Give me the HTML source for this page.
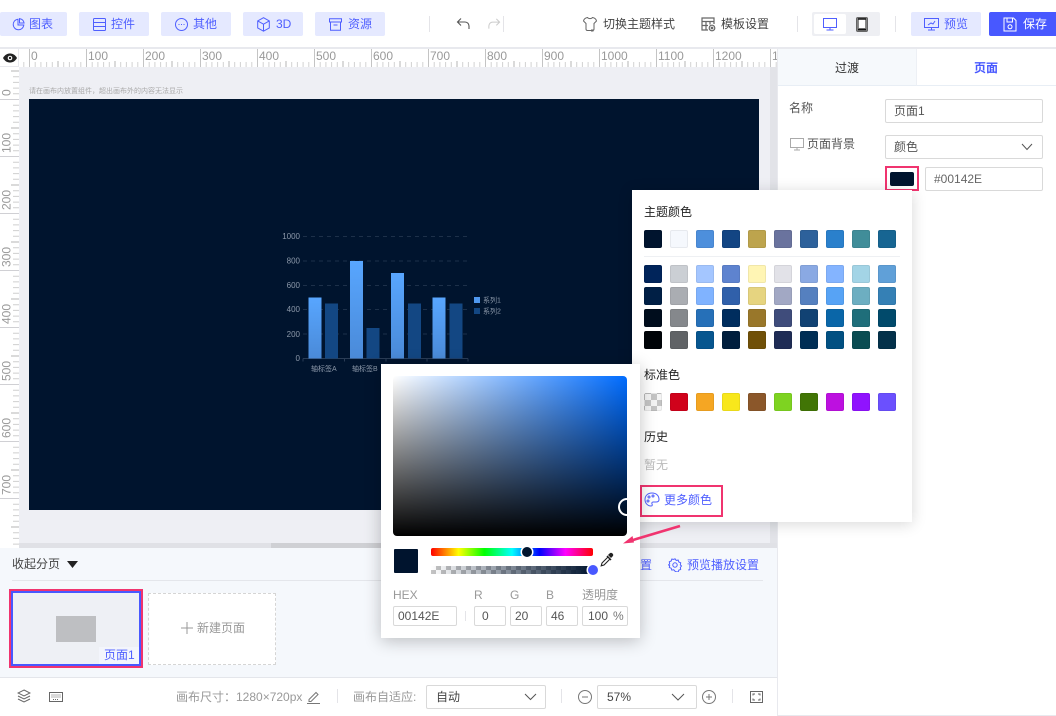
<!DOCTYPE html>
<html><head><meta charset="utf-8">
<style>
html,body{margin:0;padding:0;background:#fff}
#r{position:relative;width:1056px;height:716px;overflow:hidden;background:#fff;font-family:"Liberation Sans","Noto Sans CJK SC",sans-serif;font-size:12px;color:#333}
#r div,#r span.a,#r svg{position:absolute}
.t{white-space:nowrap;line-height:16px}
.btn{background:#e5e9ff;border-radius:2px;top:12px;height:24px}
.bt{color:#4f5fff;top:16px}
.inp{border:1px solid #d9d9d9;border-radius:2px;background:#fff;box-sizing:border-box;color:#555;line-height:20px;padding-left:3px;white-space:nowrap}
.row{left:644px;display:flex;gap:8px}
#r .row i{display:block;width:18px;height:18px;border-radius:2px;box-sizing:border-box;border:1px solid rgba(0,0,0,.06)}
.lab{color:#999;top:587px;line-height:16px}
.vd{width:1px;background:#e4e4e8}
</style></head><body><div id="r">

<!-- top bar -->
<div class="btn" style="left:0;width:67px"></div>
<div class="btn" style="left:79px;width:70px"></div>
<div class="btn" style="left:161px;width:70px"></div>
<div class="btn" style="left:243px;width:60px"></div>
<div class="btn" style="left:315px;width:70px"></div>
<svg style="left:12px;top:18px" width="13" height="13" viewBox="0 0 13 13" fill="none" stroke="#4f5fff"><path d="M6 1.200a5.300 5.300 0 1 0 5.800 5.800H6z"/><path d="M7.500.6v4.400h4.600A5 5 0 0 0 7.500.6z"/></svg>
<div class="t bt" style="left:29px">图表</div>
<svg style="left:93px;top:18px" width="13" height="13" viewBox="0 0 13 13" fill="none" stroke="#4f5fff"><rect x=".5" y=".5" width="12" height="12" rx="1"/><path d="M.5 4.500h12M.5 8.500h12"/></svg>
<div class="t bt" style="left:111px">控件</div>
<svg style="left:175px;top:18px" width="13" height="13" viewBox="0 0 13 13" fill="none" stroke="#4f5fff"><circle cx="6.500" cy="6.500" r="6"/><path d="M3.500 6.500h1M6 6.500h1M8.500 6.500h1"/></svg>
<div class="t bt" style="left:193px">其他</div>
<svg style="left:257px;top:17px" width="13" height="15" viewBox="0 0 13 15" fill="none" stroke="#4f5fff"><path d="M6.500.7l5.800 3.200v7l-5.800 3.300L.7 10.900v-7zM.7 3.900l5.800 3.300 5.800-3.300M6.500 7.200v7"/></svg>
<div class="t bt" style="left:276px">3D</div>
<svg style="left:329px;top:18px" width="13" height="13" viewBox="0 0 13 13" fill="none" stroke="#4f5fff"><path d="M.5.800h12v3.200H.5zM1.500 4v8.200h10V4M4.500 7h4"/></svg>
<div class="t bt" style="left:348px">资源</div>

<div class="vd" style="left:429px;top:16px;height:16px"></div>
<svg style="left:456px;top:17px" width="15" height="14" viewBox="0 0 15 14" fill="none" stroke="#555" stroke-width="1.100"><path d="M5 1.500L1.500 5 5 8.500M1.500 5H9a4 4 0 0 1 4 4v3"/></svg>
<svg style="left:487px;top:17px" width="14" height="14" viewBox="0 0 15 14" fill="none" stroke="#ccc" stroke-width="1.100"><path d="M10 1.500L13.500 5 10 8.500M13.500 5H6a4 4 0 0 0-4 4v3"/></svg>
<div class="vd" style="left:503px;top:16px;height:16px"></div>
<svg style="left:582px;top:16px" width="16" height="17" viewBox="0 0 16 17" fill="none" stroke="#666"><path d="M5.500 1.500C6.500 3 9.500 3 10.500 1.500c2 .3 3.500 1.500 4 3.500l-2.500 2.500V13c0 1-.5 1.500-1.500 1.500h-5C4.500 14.500 4 14 4 13V7.500L1.500 5c.5-2 2-3.200 4-3.500z"/><path d="M9 14.500h2.500" stroke-width="2"/></svg>
<div class="t" style="left:603px;top:16px;color:#444">切换主题样式</div>
<svg style="left:701px;top:17px" width="15" height="15" viewBox="0 0 15 15" fill="none" stroke="#666" stroke-width="1.200"><path d="M13 7V1H1v12h6M1 4.500h12M5 4.500V13M9 4.500v3M1 8.500h6"/><circle cx="11" cy="11" r="2.800"/><circle cx="11" cy="11" r=".8" fill="#666"/></svg>
<div class="t" style="left:721px;top:16px;color:#444">模板设置</div>
<div class="vd" style="left:797px;top:16px;height:16px"></div>
<div style="left:812px;top:12px;width:68px;height:24px;background:#eeeff3;border-radius:2px"></div>
<div style="left:814px;top:14px;width:32px;height:20px;background:#fff;border-radius:2px"></div>
<svg style="left:823px;top:18px" width="14" height="13" viewBox="0 0 14 13" fill="none" stroke="#4f5fff"><rect x=".5" y=".5" width="13" height="9"/><path d="M7 9.500V12M3.500 12h7"/></svg>
<svg style="left:856px;top:17px" width="12" height="15" viewBox="0 0 12 15" fill="none" stroke="#333"><rect x=".6" y=".6" width="10.800" height="13.800" rx="1" stroke="#555" fill="#888"/><rect x="3" y="2.500" width="6" height="8.500" fill="#fff" stroke="none"/><path d="M2 2h8M2 12.500h8" stroke="#111" stroke-width="1.500"/></svg>
<div class="vd" style="left:895px;top:16px;height:16px"></div>
<div class="btn" style="left:911px;width:70px"></div>
<svg style="left:924px;top:18px" width="15" height="13" viewBox="0 0 15 13" fill="none" stroke="#4f5fff"><rect x=".5" y=".5" width="14" height="9"/><path d="M7.500 9.500V12M4 12h7M4 7l3-2 2 1 2-3"/></svg>
<div class="t bt" style="left:944px">预览</div>
<div style="left:989px;top:12px;width:67px;height:24px;background:#4858ff;border-radius:2px 0 0 2px"></div>
<svg style="left:1003px;top:17px" width="14" height="15" viewBox="0 0 14 15" fill="none" stroke="#fff"><path d="M1 1h9.500L13 3.500V14H1zM4 1v4h5.500V1"/><circle cx="7" cy="9.800" r="2"/></svg>
<div class="t" style="left:1023px;top:16px;color:#fff">保存</div>

<!-- separator -->
<div style="left:0;top:47px;width:1056px;height:2px;background:#e8e9ee"></div>

<!-- canvas background -->
<div style="left:19px;top:67px;width:751px;height:476px;background:#eeeff4"></div>
<div style="left:770px;top:67px;width:7px;height:481px;background:#e2e3e8"></div>
<div style="left:19px;top:543px;width:758px;height:5px;background:#e0e1e6"></div>
<div style="left:271px;top:543px;width:340px;height:5px;background:#cfd0d4"></div>

<!-- horizontal ruler -->
<svg style="left:0;top:49px" width="777" height="18" viewBox="0 0 777 18">
<defs><pattern id="hp" x="29" y="0" width="57" height="18" patternUnits="userSpaceOnUse">
<path d="M.5 0V18" stroke="#c4c4c4" fill="none"/>
<path d="M6.200 13V18M11.900 13V18M17.600 13V18M23.300 13V18M34.700 13V18M40.400 13V18M46.100 13V18M51.800 13V18" stroke="#d2d2d2" fill="none"/>
<path d="M29 12V18" stroke="#b5b5b5" fill="none"/></pattern></defs>
<rect x="19" width="758" height="18" fill="#fff"/>
<rect x="19" width="758" height="18" fill="url(#hp)"/>
<g font-family="Liberation Sans" font-size="12" fill="#999">
<text x="31" y="11">0</text><text x="88" y="11">100</text><text x="145" y="11">200</text><text x="202" y="11">300</text><text x="259" y="11">400</text><text x="316" y="11">500</text><text x="373" y="11">600</text><text x="430" y="11">700</text><text x="487" y="11">800</text><text x="544" y="11">900</text><text x="601" y="11">1000</text><text x="658" y="11">1100</text><text x="715" y="11">1200</text><text x="772" y="11">1300</text></g>
</svg>
<!-- eye -->
<div style="left:0;top:49px;width:19px;height:18px;background:#fff;border-right:1px solid #e8e9ee;border-bottom:1px solid #e8e9ee;box-sizing:border-box"></div>
<svg style="left:3px;top:53px" width="14" height="10" viewBox="0 0 14 10"><path d="M0 5C2 1.500 4.500.5 7 .5S12 1.500 14 5c-2 3.500-4.500 4.500-7 4.500S2 8.500 0 5z" fill="#222"/><circle cx="7" cy="5" r="2.300" fill="#fff"/><circle cx="7" cy="5" r="1.200" fill="#222"/></svg>

<!-- vertical ruler -->
<svg style="left:0;top:67px" width="19" height="481" viewBox="0 0 19 481">
<defs><pattern id="vp" x="0" y="32" width="19" height="57" patternUnits="userSpaceOnUse">
<path d="M0 .5H19" stroke="#d0d0d4" fill="none"/>
<path d="M13 6.200H19M13 11.900H19M13 17.600H19M13 23.300H19M13 34.700H19M13 40.400H19M13 46.100H19M13 51.800H19" stroke="#cfcfcf" fill="none"/>
<path d="M11 29H19" stroke="#b5b5b5" fill="none"/></pattern></defs>
<rect width="19" height="481" fill="#fff"/>
<rect width="19" height="481" fill="url(#vp)"/>
<g font-family="Liberation Sans" font-size="12" fill="#999">
<text transform="translate(10.500,29) rotate(-90)">0</text>
<text transform="translate(10.500,86) rotate(-90)">100</text>
<text transform="translate(10.500,143) rotate(-90)">200</text>
<text transform="translate(10.500,200) rotate(-90)">300</text>
<text transform="translate(10.500,257) rotate(-90)">400</text>
<text transform="translate(10.500,314) rotate(-90)">500</text>
<text transform="translate(10.500,371) rotate(-90)">600</text>
<text transform="translate(10.500,428) rotate(-90)">700</text></g>
</svg>

<!-- canvas -->
<div class="t" style="left:29px;top:84px;font-size:7px;color:#aaa">请在画布内放置组件，超出画布外的内容无法显示</div>
<div style="left:29px;top:99px;width:730px;height:411px;background:#00142e"></div>

<!-- chart -->
<svg style="left:270px;top:220px" width="250" height="165" viewBox="0 0 250 165">
<defs><linearGradient id="g1" x1="0" y1="0" x2="0" y2="1"><stop offset="0" stop-color="#58a6ff"/><stop offset="1" stop-color="#4a8ad8"/></linearGradient></defs>
<g stroke="#1d3049" stroke-dasharray="4 4" fill="none"><path d="M33 16.500H198M33 41H198M33 65.500H198M33 89.500H198M33 114H198"/></g>
<path d="M33 138.500H198M33 138.500v3M74.500 138.500v3M116 138.500v3M157 138.500v3M198 138.500v3" stroke="#2a3c55" fill="none"/>
<g fill="url(#g1)"><rect x="38.500" y="77.500" width="13" height="61"/><rect x="80" y="41" width="13" height="97.500"/><rect x="121" y="53" width="13" height="85.500"/><rect x="162.500" y="77.500" width="13" height="61"/></g>
<g fill="#134783"><rect x="55" y="83.500" width="13" height="55"/><rect x="96.500" y="108" width="13" height="30.500"/><rect x="138" y="83.500" width="13" height="55"/><rect x="179.500" y="83.500" width="13" height="55"/></g>
<g font-family="Liberation Sans" font-size="8" fill="#8b98a9" text-anchor="end"><text x="30" y="19">1000</text><text x="30" y="43.500">800</text><text x="30" y="68">600</text><text x="30" y="92">400</text><text x="30" y="117">200</text><text x="30" y="141">0</text></g>
<rect x="204" y="77" width="6" height="6" fill="#4f98ef"/><rect x="204" y="88" width="6" height="6" fill="#134783"/>
<g font-family="Liberation Sans,Noto Sans CJK SC" font-size="7" fill="#8b98a9"><text x="213" y="82.500">系列1</text><text x="213" y="93.500">系列2</text><text x="41" y="151">轴标签A</text><text x="82" y="151">轴标签B</text></g>
</svg>

<!-- right panel -->
<div style="left:777px;top:49px;width:279px;height:667px;background:#fff;border-left:1px solid #e8e9ee;border-bottom:1px solid #e8e9ee;box-sizing:border-box"></div>
<div style="left:778px;top:49px;width:138px;height:37px;background:#f6f9fc;border-bottom:1px solid #e8eef5;box-sizing:border-box"></div>
<div style="left:916px;top:49px;width:140px;height:37px;border-left:1px solid #edf0f5;border-bottom:1px solid #e8eef5;box-sizing:border-box"></div>
<div class="t" style="left:835px;top:60px;color:#333">过渡</div>
<div class="t" style="left:974px;top:60px;color:#4858ff;font-weight:bold">页面</div>
<div class="t" style="left:789px;top:100px;color:#555">名称</div>
<div class="inp" style="left:885px;top:99px;width:158px;height:24px;padding-left:8px;line-height:23px">页面1</div>
<svg style="left:790px;top:138px" width="15" height="13" viewBox="0 0 15 13" fill="none" stroke="#aaa"><rect x=".5" y=".5" width="13" height="9"/><path d="M7 9.500V12M4 12h6"/></svg>
<div class="t" style="left:807px;top:136px;color:#555">页面背景</div>
<div class="inp" style="left:885px;top:135px;width:158px;height:24px;padding-left:8px;line-height:23px">颜色</div>
<svg style="left:1021px;top:143px" width="12" height="8" viewBox="0 0 12 8" fill="none" stroke="#555"><path d="M1 1l5 5.500L11 1"/></svg>
<div style="left:885px;top:166px;width:34px;height:25px;border:2px solid #f0346f;box-sizing:border-box"></div>
<div style="left:890px;top:172px;width:24px;height:14px;background:#00142e;border-radius:2px"></div>
<div class="inp" style="left:925px;top:167px;width:118px;height:24px;padding-left:8px;line-height:23px;color:#666">#00142E</div>

<!-- bottom panel -->
<div style="left:0;top:548px;width:777px;height:129px;background:#f5f8fc"></div>
<div style="left:0;top:677px;width:777px;height:1px;background:#e4e6eb"></div>
<div class="t" style="left:12px;top:556px;color:#444">收起分页</div>
<svg style="left:67px;top:561px" width="11" height="7" viewBox="0 0 11 7"><path d="M0 0h11L5.500 7z" fill="#222"/></svg>
<div style="left:12px;top:580px;width:751px;height:1px;background:#e4e6eb"></div>
<div class="t" style="left:640px;top:557px;color:#4f5fff">置</div>
<svg style="left:668px;top:558px" width="14" height="14" viewBox="0 0 14 14" fill="none" stroke="#4f5fff"><path d="M7 .8l1.200 1.600 2-.3.600 1.900 1.900.8-.4 2 1.200 1.200-1.200 1.500.4 1.900-1.900.7-.6 1.900-2-.3L7 13.200l-1.200-1.400-2 .3-.6-1.900-1.900-.7.400-1.900L.5 7l1.200-1.200-.4-2 1.900-.8.600-1.900 2 .3z"/><circle cx="7" cy="7" r="2.200"/></svg>
<div class="t" style="left:687px;top:557px;color:#4f5fff">预览播放设置</div>

<div style="left:9px;top:589px;width:134px;height:79px;border:2px solid #f0346f;box-sizing:border-box"></div>
<div style="left:11px;top:591px;width:130px;height:75px;border:2px solid #4858ff;background:#eef0f5;box-sizing:border-box"></div>
<div style="left:56px;top:616px;width:40px;height:26px;background:#bebfc2"></div>
<div style="left:99px;top:647px;width:40px;height:17px;background:#f3f5fc"></div>
<div class="t" style="left:104px;top:647px;color:#4f5fff">页面1</div>
<div style="left:148px;top:593px;width:128px;height:72px;border:1px dashed #d5d5d5;background:#fff;box-sizing:border-box"></div>
<svg style="left:181px;top:622px" width="12" height="12" viewBox="0 0 12 12" stroke="#999" fill="none"><path d="M6 0V12M0 6H12"/></svg>
<div class="t" style="left:197px;top:620px;color:#999">新建页面</div>

<!-- footer -->
<svg style="left:17px;top:689px" width="14" height="14" viewBox="0 0 14 14" fill="none" stroke="#666"><path d="M7 1l6 3-6 3-6-3zM1 7l6 3 6-3M1 10l6 3 6-3"/></svg>
<svg style="left:49px;top:692px" width="14" height="10" viewBox="0 0 14 10" fill="none" stroke="#666"><rect x=".5" y=".5" width="13" height="9"/><path d="M2.500 3h9M2.500 5h9M4 7.500h6" stroke-dasharray="1 1"/></svg>
<div class="t" style="left:176px;top:689px;color:#999">画布尺寸：1280×720px</div>
<svg style="left:307px;top:690px" width="14" height="14" viewBox="0 0 14 14" fill="none" stroke="#777"><path d="M2 9.500L9 2.500l2 2-7 7H2zM0 13.500h13"/></svg>
<div class="vd" style="left:337px;top:689px;height:14px"></div>
<div class="t" style="left:353px;top:689px;color:#999">画布自适应:</div>
<div class="inp" style="left:426px;top:685px;width:120px;height:24px;padding-left:9px;line-height:23px;color:#444">自动</div>
<svg style="left:524px;top:693px" width="13" height="8" viewBox="0 0 13 8" fill="none" stroke="#555"><path d="M1 1l5.500 5.500L12 1"/></svg>
<div class="vd" style="left:561px;top:689px;height:14px"></div>
<svg style="left:578px;top:690px" width="14" height="14" viewBox="0 0 14 14" fill="none" stroke="#777"><circle cx="7" cy="7" r="6.500"/><path d="M4 7h6"/></svg>
<div class="inp" style="left:597px;top:685px;width:100px;height:24px;padding-left:9px;line-height:23px;color:#444">57%</div>
<svg style="left:671px;top:693px" width="14" height="8" viewBox="0 0 14 8" fill="none" stroke="#555"><path d="M1 1l6 6 6-6"/></svg>
<svg style="left:702px;top:690px" width="14" height="14" viewBox="0 0 14 14" fill="none" stroke="#777"><circle cx="7" cy="7" r="6.500"/><path d="M4 7h6M7 4v6"/></svg>
<div class="vd" style="left:732px;top:689px;height:14px"></div>
<svg style="left:750px;top:691px" width="13" height="12" viewBox="0 0 13 12" fill="none" stroke="#666"><rect x=".5" y=".5" width="12" height="11"/><path d="M3 4.500V3h2M8 3h2v1.500M10 7.500V9H8M5 9H3V7.500"/></svg>

<!-- theme popup -->
<div style="left:632px;top:190px;width:280px;height:332px;background:#fff;box-shadow:0 2px 14px rgba(0,0,0,.16)"></div>
<div class="t" style="left:644px;top:204px;color:#222">主题颜色</div>
<div class="row" style="top:230px"><i style="background:#00142e"></i><i style="background:#f5f8fd"></i><i style="background:#4d8fdc"></i><i style="background:#134583"></i><i style="background:#bda44d"></i><i style="background:#6a739e"></i><i style="background:#2d619b"></i><i style="background:#2a80cc"></i><i style="background:#408d99"></i><i style="background:#176592"></i></div>
<div style="left:644px;top:256px;width:256px;height:1px;background:#eef0f3"></div>
<div class="row" style="top:265px"><i style="background:#00245a"></i><i style="background:#cbcfd4"></i><i style="background:#a4c6ff"></i><i style="background:#5e83cf"></i><i style="background:#fff5b4"></i><i style="background:#e2e2e8"></i><i style="background:#8aa9e3"></i><i style="background:#84b4ff"></i><i style="background:#a3d4e6"></i><i style="background:#60a0d8"></i></div>
<div class="row" style="top:287px"><i style="background:#001f45"></i><i style="background:#aaadb2"></i><i style="background:#80b3ff"></i><i style="background:#3060aa"></i><i style="background:#e6d480"></i><i style="background:#a2a8c4"></i><i style="background:#5580bf"></i><i style="background:#57a3f5"></i><i style="background:#6daec1"></i><i style="background:#3580b5"></i></div>
<div class="row" style="top:309px"><i style="background:#000d1d"></i><i style="background:#85888c"></i><i style="background:#2670b8"></i><i style="background:#002d5e"></i><i style="background:#99772a"></i><i style="background:#3f4c7b"></i><i style="background:#114273"></i><i style="background:#0a66a8"></i><i style="background:#1f6e7a"></i><i style="background:#014a6b"></i></div>
<div class="row" style="top:331px"><i style="background:#000408"></i><i style="background:#606366"></i><i style="background:#07568f"></i><i style="background:#001e3d"></i><i style="background:#705008"></i><i style="background:#1f2c55"></i><i style="background:#002e55"></i><i style="background:#025082"></i><i style="background:#0a4c52"></i><i style="background:#03314a"></i></div>
<div class="t" style="left:644px;top:367px;color:#222">标准色</div>
<div class="row" style="top:393px"><i style="background:repeating-conic-gradient(#c4c4c4 0 25%,#f4f4f4 0 50%) 0 0/12px 12px"></i><i style="background:#d0021b"></i><i style="background:#f5a623"></i><i style="background:#f8e71c"></i><i style="background:#8b572a"></i><i style="background:#7ed321"></i><i style="background:#417505"></i><i style="background:#bd10e0"></i><i style="background:#9013fe"></i><i style="background:#6b50fe"></i></div>
<div class="t" style="left:644px;top:429px;color:#222">历史</div>
<div class="t" style="left:644px;top:457px;color:#bbb">暂无</div>
<div style="left:640px;top:485px;width:83px;height:32px;border:2px solid #f0346f;box-sizing:border-box"></div>
<svg style="left:644px;top:492px" width="16" height="15" viewBox="0 0 16 15" fill="none" stroke="#4f5fff"><path d="M8 1C3.500 1 1 4 1 7.500S3.500 14 7 14c1.500 0 1.500-1.200 1-2-.5-1 0-2 1.200-2H12c2 0 3-1 3-2.500C15 3.500 12 1 8 1z"/><circle cx="5" cy="5" r="1"/><circle cx="9" cy="4" r="1"/><circle cx="4" cy="9" r="1"/></svg>
<div class="t" style="left:664px;top:492px;color:#4f5fff">更多颜色</div>

<!-- color picker -->
<div style="left:381px;top:364px;width:259px;height:274px;background:#fff;box-shadow:0 3px 16px rgba(0,0,0,.24);overflow:hidden"></div>
<div style="left:393px;top:376px;width:234px;height:160px;border-radius:4px;background:linear-gradient(to top,#000,rgba(0,0,0,0)),linear-gradient(to right,#fff,#006cff);overflow:hidden">
<div style="left:225px;top:122px;width:14px;height:14px;border:2px solid #fff;border-radius:50%;box-sizing:content-box"></div></div>
<div style="left:394px;top:549px;width:24px;height:24px;background:#00142e;border-radius:1px"></div>
<div style="left:431px;top:548px;width:162px;height:8px;border-radius:2px;background:linear-gradient(to right,#f00 0,#ff0 17%,#0f0 33%,#0ff 50%,#00f 67%,#f0f 83%,#f00 100%)"></div>
<div style="left:522px;top:547px;width:10px;height:10px;border-radius:50%;background:#00142e;box-shadow:0 0 0 1.500px #fff"></div>
<div style="left:431px;top:566px;width:162px;height:8px;background:linear-gradient(to right,rgba(0,20,46,0),#00142e),repeating-conic-gradient(#c4c4c4 0 25%,#fff 0 50%) 0 0/10px 8px"></div>
<div style="left:588px;top:565px;width:10px;height:10px;border-radius:50%;background:#4858ff;box-shadow:0 0 0 1.500px #fff"></div>
<svg style="left:600px;top:552px" width="15" height="15" viewBox="0 0 15 15" fill="none"><path d="M9.500 1.500c1-1 2-1 3 0s1 2 0 3l-1.500 1.500-3-3z" fill="#222"/><path d="M7 4l4 4" stroke="#222" stroke-width="1.500"/><path d="M8 5L2 11l-.8 2.800L4 13l6-6" stroke="#222" stroke-width="1.100"/></svg>
<div class="t lab" style="left:393px">HEX</div>
<div class="t lab" style="left:474px">R</div>
<div class="t lab" style="left:510px">G</div>
<div class="t lab" style="left:546px">B</div>
<div class="t lab" style="left:582px">透明度</div>
<div class="inp" style="left:393px;top:606px;width:64px;height:20px;line-height:19px;padding-left:4px">00142E</div>
<div class="vd" style="left:465px;top:611px;height:10px"></div>
<div class="inp" style="left:474px;top:606px;width:32px;height:20px;line-height:19px;padding-left:7px">0</div>
<div class="inp" style="left:510px;top:606px;width:32px;height:20px;line-height:19px;padding-left:4px">20</div>
<div class="inp" style="left:546px;top:606px;width:32px;height:20px;line-height:19px;padding-left:4px">46</div>
<div class="inp" style="left:582px;top:606px;width:46px;height:20px;line-height:19px;padding-left:5px">100</div>
<div class="t" style="left:613px;top:608px;color:#777">%</div>

<!-- arrow -->
<svg style="left:620px;top:522px" width="64" height="26" viewBox="0 0 64 26" fill="none"><path d="M60 4L8 19.500" stroke="#f0346f" stroke-width="2.600"/><path d="M3 21.500l9.500-7.500 1.500 6.500z" fill="#f0346f"/></svg>
</div></body></html>
